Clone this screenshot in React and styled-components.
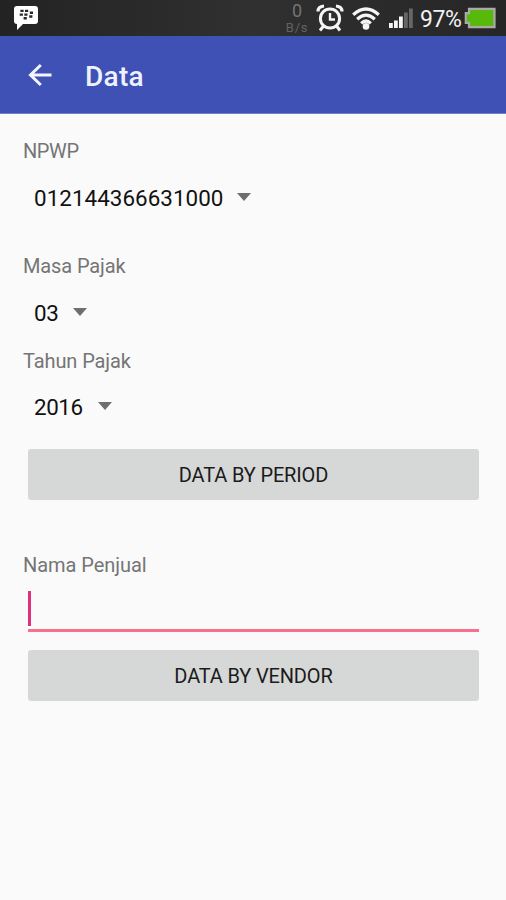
import React from 'react'
import styled, { createGlobalStyle } from 'styled-components'

const GlobalStyle = createGlobalStyle`
  * {
    box-sizing: border-box;
  }

  body {
    margin: 0;
    background-color: #fafafa;
    font-family: Roboto, "Liberation Sans", sans-serif;
  }
`;

const Screen = styled.div`
  width: 506px;
  height: 900px;
  overflow: hidden;
  background-color: #fafafa;
`;

const StatusBar = styled.div`
  height: 36px;
  padding: 0 10px 0 13px;
  display: flex;
  align-items: center;
  background: linear-gradient(90deg, #232323, #303030 50%, #262626);
`;

const StatusIcon = styled.svg`
  display: block;
  flex: none;
  margin-left: ${props => props.$gap || 0}px;
`;

const Speed = styled.div`
  margin-left: auto;
  width: 24px;
  display: flex;
  flex-direction: column;
  align-items: center;
  color: #747474;
`;

const SpeedValue = styled.span`
  font-size: 18px;
  line-height: 20px;
  height: 20px;
`;

const SpeedUnit = styled.span`
  font-size: 13px;
  line-height: 14px;
  letter-spacing: 0.7px;
  color: #626262;
`;

const Percent = styled.span`
  width: 44px;
  margin-left: 7px;
  padding-top: 3px;
  color: #f2f2f2;
  font-size: 23px;
  line-height: 34px;
  letter-spacing: -0.4px;
  white-space: nowrap;
`;

const Toolbar = styled.header`
  height: 78px;
  padding-left: 28px;
  display: flex;
  align-items: center;
  background-color: #3f51b5;
  border-bottom: 1px solid #7480c6;
`;

const Title = styled.h1`
  margin: 5px 0 0 33px;
  color: #eef1ff;
  font-size: 28px;
  font-weight: 500;
  line-height: 34px;
  letter-spacing: 0.3px;
`;

const Form = styled.form`
  padding: 25px 24px 0 23px;
`;

const Label = styled.label`
  display: block;
  margin-top: ${props => props.$top || 0}px;
  color: #757575;
  font-size: 20px;
  line-height: 24px;
  letter-spacing: ${props => props.$spacing || 0}px;
`;

const Select = styled.div`
  height: 48px;
  margin: ${props => props.$margin};
  padding-left: 11px;
  display: flex;
  align-items: center;
  color: #111;
  font-size: 22.4px;
  letter-spacing: ${props => props.$spacing || 0}px;
`;

const Arrow = styled.span`
  margin: -2px 0 0 ${props => props.$gap}px;
  border: 7px solid transparent;
  border-top: 8px solid #6e6e6e;
  border-bottom: 0;
`;

const Button = styled.button`
  display: block;
  width: 451px;
  height: 51px;
  margin-left: 5px;
  padding: 1px 0 0;
  border: none;
  border-radius: 3px;
  background-color: #d6d8d7;
  color: #1b1b1b;
  font-family: inherit;
  font-size: 20px;
  letter-spacing: -0.15px;
`;

const Field = styled.div`
  width: 451px;
  height: 42px;
  margin: 13px 0 18px 5px;
  padding-top: 1px;
  border-bottom: 3px solid #f8708f;
`;

const Caret = styled.span`
  display: block;
  width: 3px;
  height: 35px;
  background-color: #e0317c;
`;

function App() {
  return (
    <Screen>
      <GlobalStyle />
      <StatusBar>
        <StatusIcon width="26" height="26" viewBox="0 0 26 26">
          <path d="M4 1h18q3 0 3 3v12q0 3-3 3H10l-6 6v-6q-3 0-3-3V4q0-3 3-3z" fill="#fff" />
          <path
            d="M7.4 5.9h3.2M12 5.9h3.2M6.7 9.6h3.2M11.3 9.6h3.2M16.8 7.8H20M16.2 11.5h3.2M10.6 13.3h3.2"
            stroke="#292929"
            strokeWidth="2.4"
          />
        </StatusIcon>
        <Speed>
          <SpeedValue>0</SpeedValue>
          <SpeedUnit>B/s</SpeedUnit>
        </Speed>
        {/* alarm */}
        <StatusIcon $gap={7} width="28" height="28" viewBox="0 0 28 28" fill="none" stroke="#f5f5f5">
          <circle cx="14" cy="14.5" r="9.6" strokeWidth="3" />
          <path d="M14 9v6.5h5" strokeWidth="2.4" />
          <path d="M2 7.5q0-5 6-5.5M26 7.5q0-5-6-5.5" strokeWidth="3.2" />
          <path d="M7.5 22l-3.5 4.5M20.5 22l3.5 4.5" strokeWidth="3" />
        </StatusIcon>
        {/* wifi */}
        <StatusIcon $gap={8} width="28" height="24" viewBox="0 0 28 24" fill="none" stroke="#f5f5f5" strokeWidth="3.2">
          <path d="M1.2 8.8Q14-2.8 26.8 8.8" />
          <path d="M5.2 13.2Q14 5.2 22.8 13.2" />
          <path d="M9.2 17.3Q14 12.6 18.8 17.3" />
          <circle cx="14" cy="20.4" r="3.3" fill="#f5f5f5" stroke="none" />
        </StatusIcon>
        {/* mobile signal */}
        <StatusIcon $gap={9} width="24" height="20" viewBox="0 0 24 20" fill="#f5f5f5">
          <path d="M0 15h3.8v5H0zM5 12.5h3.8V20H5zM10 8.5h3.8V20H10z" />
          <path d="M15 4.5h3.8V20H15zM20 0.5h3.8V20H20z" fill="#666" />
        </StatusIcon>
        <Percent>97%</Percent>
        <StatusIcon width="32" height="22" viewBox="0 0 32 22">
          <path d="M5 1.8h25.5v18.4H5v-4.4H1.8V6.2H5z" fill="#58b90c" stroke="#aaa" strokeWidth="2.2" />
        </StatusIcon>
      </StatusBar>
      <Toolbar>
        <svg width="24" height="24" viewBox="0 0 24 24" fill="none" stroke="#f4f6ff" strokeWidth="3">
          <path d="M23.5 12H3M12.8 2L2.5 12l10.3 10" />
        </svg>
        <Title>Data</Title>
      </Toolbar>
      <Form>
        <Label $spacing={-0.4}>NPWP</Label>
        <Select $margin="11px 0 32px" $spacing={0.05}>
          012144366631000
          <Arrow $gap={13} />
        </Select>
        <Label $spacing={-0.12}>Masa Pajak</Label>
        <Select $margin="11px 0 12px" $spacing={-0.3}>
          03
          <Arrow $gap={14} />
        </Select>
        <Label $spacing={-0.1}>Tahun Pajak</Label>
        <Select $margin="10px 0 18px" $spacing={-0.4}>
          2016
          <Arrow $gap={15} />
        </Select>
        <Button type="button">DATA BY PERIOD</Button>
        <Label $top={53} $spacing={-0.05}>Nama Penjual</Label>
        <Field>
          <Caret />
        </Field>
        <Button type="button">DATA BY VENDOR</Button>
      </Form>
    </Screen>
  )
}

export default App
